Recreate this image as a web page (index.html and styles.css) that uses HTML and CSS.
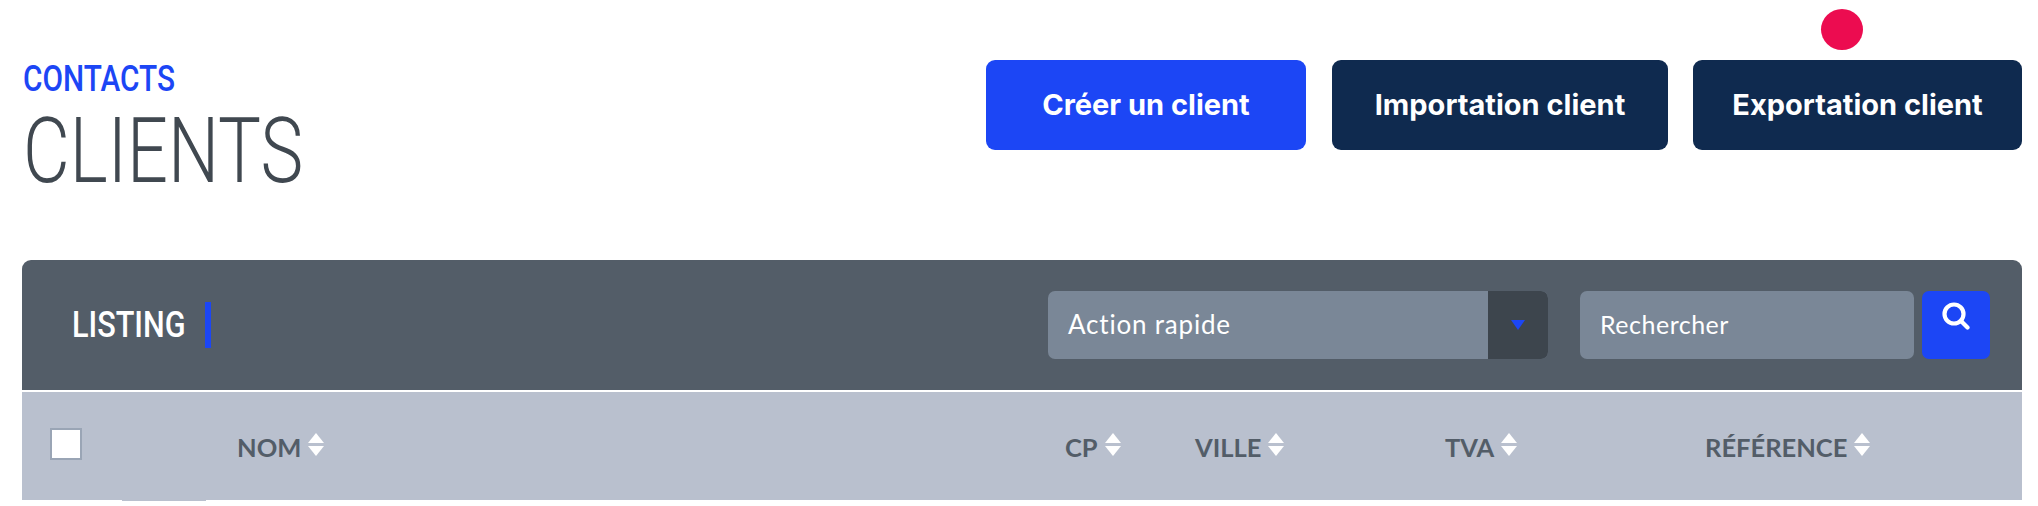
FILE: index.html
```html
<!DOCTYPE html>
<html lang="fr">
<head>
<meta charset="utf-8">
<title>Clients</title>
<link rel="stylesheet" href="styles.css">
</head>
<body>
<span class="dot"></span>
<header class="head">
  <div class="titles">
    <div class="crumb"><span class="crumb-text">CONTACTS</span></div>
    <h1 class="title"><span class="title-text">CLIENTS</span></h1>
  </div>
  <div class="actions">
    <a class="btn btn-blue">Créer un client</a>
    <a class="btn btn-navy btn-import">Importation client</a>
    <a class="btn btn-navy btn-export">Exportation client</a>
  </div>
</header>
<section class="panel">
  <div class="toolbar">
    <div class="listing"><div class="listing-box"><span class="listing-text">LISTING</span></div></div>
    <div class="select">
      <span class="select-label">Action rapide</span>
      <span class="select-arrow"><i class="caret"></i></span>
    </div>
    <div class="search">Rechercher</div>
    <button class="search-btn" type="button" aria-label="Rechercher">
      <svg class="search-icon" viewBox="0 0 28 28" width="28" height="28"><circle cx="12" cy="12" r="9.5" fill="none" stroke="#fff" stroke-width="4.2"/><path d="M19 19l6.5 6.5" fill="none" stroke="#fff" stroke-width="4.2" stroke-linecap="round"/></svg>
    </button>
  </div>
  <div class="thead">
    <div class="cell"><span class="check"></span></div>
    <div class="cell"><span class="th-label">NOM</span><span class="sort"><i class="up"></i><i class="down"></i></span></div>
    <div class="cell"><span class="th-label">CP</span><span class="sort"><i class="up"></i><i class="down"></i></span></div>
    <div class="cell"><span class="th-label">VILLE</span><span class="sort"><i class="up"></i><i class="down"></i></span></div>
    <div class="cell"><span class="th-label">TVA</span><span class="sort"><i class="up"></i><i class="down"></i></span></div>
    <div class="cell"><span class="th-label">RÉFÉRENCE</span><span class="sort"><i class="up"></i><i class="down"></i></span></div>
  </div>
  <div class="sliver"></div>
</section>
</body>
</html>
```
FILE: styles.css
```css
* { box-sizing: border-box; }
html, body { margin: 0; background: #fff; }
body { font-family: "Lato", "Liberation Sans", sans-serif; position: relative; height: 506px; overflow: hidden; }

.dot { position: absolute; left: 1821px; top: 9px; width: 42px; height: 41px; border-radius: 50%; background: #ec0c50; }

.head { display: flex; justify-content: space-between; height: 260px; padding: 60px 16px 0 23px; }
.crumb { height: 40px; line-height: 37px; font-family: "Roboto", sans-serif; font-size: 37px; font-weight: 500; color: #1c46f5; white-space: nowrap; }
.crumb-text { display: inline-block; transform: scaleX(.805); transform-origin: left; }
.title { margin: 7px 0 0; font-family: "Roboto", sans-serif; font-weight: 300; font-size: 90px; line-height: 90px; color: #404850; white-space: nowrap; }
.title-text { display: inline-block; transform: scaleX(.8); transform-origin: left; }

.actions { display: flex; }
.btn { display: flex; align-items: center; justify-content: center; height: 90px; padding-bottom: 2px; border-radius: 9px; color: #fff; font-family: "Inter", sans-serif; font-weight: 700; font-size: 29px; white-space: nowrap; }
.btn-blue { width: 320px; background: #1c46f5; }
.btn-navy { background: #0f2a4f; }
.btn-import { width: 336px; margin-left: 26px; }
.btn-export { width: 329px; margin-left: 25px; }

.panel { margin: 0 16px 0 22px; }
.toolbar { display: flex; align-items: center; height: 130px; background: #535d68; border-radius: 9px 9px 0 0; padding-right: 32px; }
.listing { flex: 1; display: flex; align-items: center; padding-left: 50px; }
.listing-box { display: flex; align-items: center; height: 46px; width: 139px; border-right: 6px solid #1c46f5; }
.listing-text { display: inline-block; transform: scaleX(.85); transform-origin: left; font-family: "Roboto", sans-serif; font-size: 36px; font-weight: 500; color: #fff; white-space: nowrap; }
.select { display: flex; width: 500px; height: 68px; border-radius: 7px; overflow: hidden; background: #7a8797; color: #fff; font-size: 26px; letter-spacing: .8px; }
.select-label { flex: 1; display: flex; align-items: center; padding: 0 0 3px 20px; }
.select-arrow { width: 60px; display: flex; align-items: center; justify-content: center; background: #3d454d; }
.caret { width: 0; height: 0; border-left: 7px solid transparent; border-right: 7px solid transparent; border-top: 10px solid #1c46f5; }
.search { display: flex; align-items: center; width: 334px; height: 68px; margin-left: 32px; padding: 0 0 3px 20px; border-radius: 7px; background: #7a8797; color: #fff; font-size: 25px; letter-spacing: .5px; }
.search-btn { display: flex; justify-content: center; align-items: flex-start; width: 68px; height: 68px; margin-left: 8px; padding: 11px 0 0; border: 0; border-radius: 7px; background: #1c46f5; }
.search-icon { display: block; }

.thead { display: grid; grid-template-columns: 187px 828px 130px 250px 260px 1fr; align-items: center; height: 108px; margin-top: 2px; padding: 0 0 4px 28px; background: #b9c0ce; color: #535d68; font-size: 25.5px; font-weight: 700; }
.cell { display: flex; align-items: center; white-space: nowrap; }
.th-label { margin-top: 6px; }
.check { display: block; width: 32px; height: 32px; background: #fff; border: 2px solid #9aa5b5; }
.sort { display: flex; flex-direction: column; gap: 3px; margin-left: 7px; }
.up, .down { display: block; width: 0; height: 0; border-left: 8px solid transparent; border-right: 8px solid transparent; }
.up { border-bottom: 10px solid #fff; }
.down { border-top: 10px solid #fff; }
.sliver { width: 84px; height: 1px; margin-left: 100px; background: #b9c0ce; }
```
